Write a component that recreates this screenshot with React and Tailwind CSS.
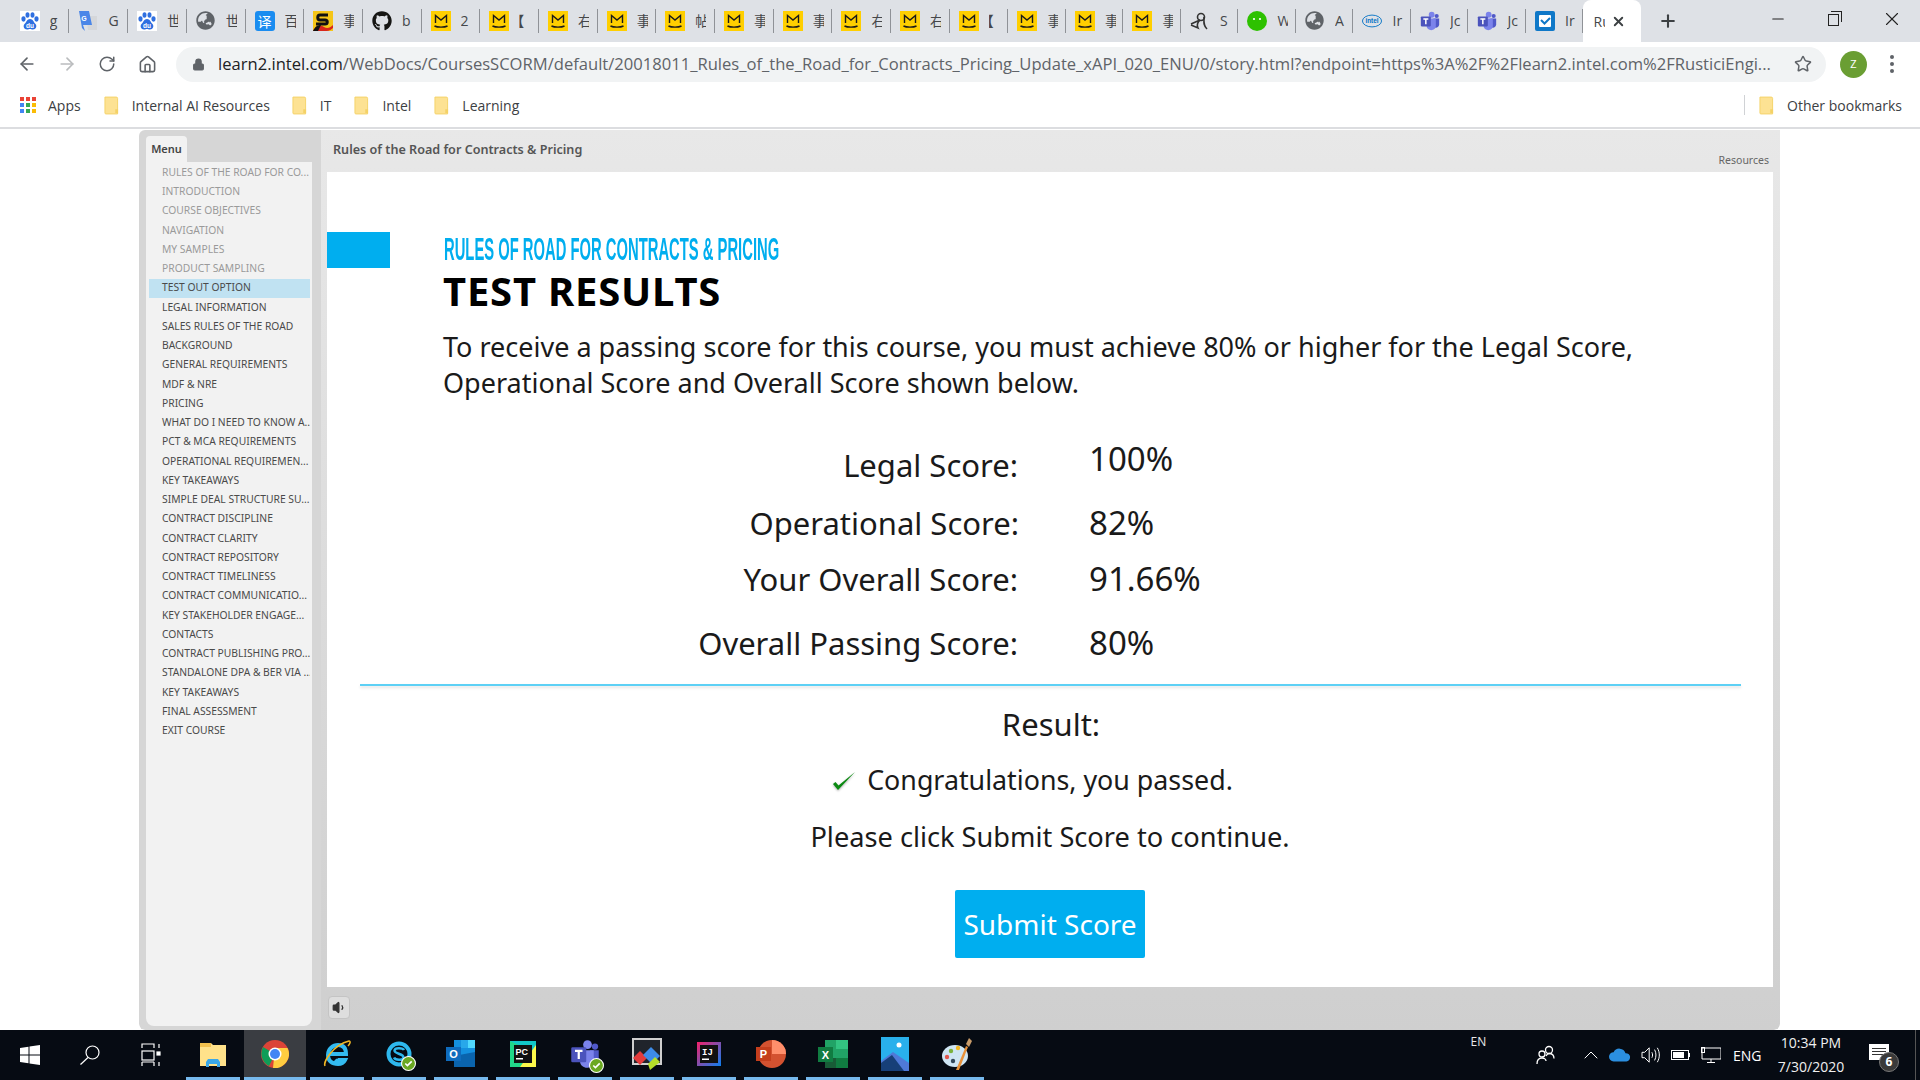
import React from "react";
import { ArrowLeft, ArrowRight, RotateCw, House, Lock, Star, X, Plus, Minus, Volume1, ChevronUp } from "lucide-react";
import { FaGithub, FaGlobeAsia } from "react-icons/fa";

const BaiduIcon = () => (
  <svg viewBox="0 0 20 20" className="w-5 h-5">
    <rect width="20" height="20" fill="#fff" />
    <g fill="#2f6fe0">
      <ellipse cx="3.5" cy="8" rx="2.1" ry="2.7" />
      <ellipse cx="7.5" cy="4" rx="2" ry="2.8" />
      <ellipse cx="12.5" cy="4" rx="2" ry="2.8" />
      <ellipse cx="16.5" cy="8" rx="2.1" ry="2.7" />
      <path d="M10 8c-3 0-3.500 3-5.500 5-1.800 2-.5 5.500 2.500 5.500 1.500 0 2-.5 3-.5s1.500.5 3 .5c3 0 4.300-3.500 2.500-5.500-2-2-2.500-5-5.500-5z" />
    </g>
    <text x="10" y="16.500" fontSize="6.500" fill="#fff" textAnchor="middle" fontFamily="Liberation Sans" fontWeight="700">du</text>
  </svg>
);
const GTranslateIcon = () => (
  <svg viewBox="0 0 20 20" className="w-5 h-5">
    <path d="M8 5h11v14H10z" fill="#d5d7da" />
    <path d="M1 0h10l3 14H5l2 6-3-3z" fill="#4a86e8" />
    <text x="6" y="10" fontSize="7" fill="#fff" textAnchor="middle" fontFamily="Liberation Sans" fontWeight="700">G</text>
  </svg>
);
const GlobeIcon = () => <FaGlobeAsia className="w-[19px] h-[19px] text-[#5f6368]" />;
const YiIcon = () => (
  <div className="w-5 h-5 rounded-[3px] bg-[#1a8cf0] flex items-center justify-center text-white text-[14px] leading-none font-['Noto_Sans_CJK_SC',sans-serif]">译</div>
);
const SIcon = () => (
  <svg viewBox="0 0 20 20" className="w-5 h-5">
    <rect width="20" height="20" fill="#f5c518" />
    <path d="M15 4H7C4 4 4 9 7 9h5c3 0 3 4 0 4H3" fill="none" stroke="#111" strokeWidth="3" />
    <path d="M0 20c3-6 8-6 11-4 3 2 6 1 9-2v3c-3 3-6 3-9 3z" fill="#d9261c" />
    <path d="M0 20c2-4 4-6 8-6l-3 6z" fill="#111" />
  </svg>
);
const GithubIcon = () => <FaGithub className="w-5 h-5 text-[#161614]" />;
const MailIcon = () => (
  <svg viewBox="0 0 20 20" className="w-5 h-5">
    <rect width="20" height="25" y="0" fill="#ffcf00" />
    <path d="M4.500 12V4.500L10 9l5.500-4.500V12" fill="none" stroke="#1a1a1a" strokeWidth="1.400" />
    <path d="M3.500 15c3 1.500 10 1.500 13 0" fill="none" stroke="#1a1a1a" strokeWidth="1.400" />
  </svg>
);
const CursiveIcon = () => (
  <svg viewBox="0 0 20 20" className="w-5 h-5" fill="none" stroke="#333" strokeWidth="1.600">
    <circle cx="11" cy="6" r="3.500" />
    <path d="M14 6c0 5-1 8 3 12M1 13l9-4c-3 3-3 6-2 8l-7-3" />
  </svg>
);
const WechatIcon = () => (
  <svg viewBox="0 0 20 20" className="w-5 h-5">
    <circle cx="10" cy="10" r="10" fill="#2dc100" />
    <circle cx="7" cy="8" r="1.100" fill="#fff" />
    <circle cx="13" cy="8" r="1.100" fill="#fff" />
  </svg>
);
const IntelIcon = () => (
  <svg viewBox="0 0 22 20" className="w-5 h-5">
    <ellipse cx="11" cy="10" rx="10.500" ry="6.500" fill="none" stroke="#0071c5" strokeWidth="1" />
    <text x="11" y="12.500" fontSize="7" fill="#0071c5" textAnchor="middle" fontFamily="Liberation Sans" fontWeight="700">intel</text>
  </svg>
);
const TeamsSmall = ({ big = false }) => (
  <svg viewBox="0 0 24 24" className={big ? "w-[30px] h-[30px]" : "w-5 h-5"}>
    <circle cx="14" cy="4.500" r="3.500" fill="#7b83eb" />
    <circle cx="20" cy="6" r="2.500" fill="#5059c9" />
    <path d="M16 9h7v7c0 3-2 4-4 4s-3-1-3-3z" fill="#5059c9" />
    <path d="M8 9h11v9c0 3-3 5-5.500 5S8 21 8 18z" fill="#7b83eb" />
    <rect x="1" y="6.500" width="12" height="12" rx="1" fill="#4b53bc" />
    <path d="M4 9.500h6M7 9.500v6.500" stroke="#fff" strokeWidth="1.800" fill="none" />
  </svg>
);
const CheckTile = () => (
  <svg viewBox="0 0 20 20" className="w-5 h-5">
    <rect width="20" height="20" rx="2" fill="#0f78c8" />
    <rect x="4" y="4" width="12" height="12" rx="1" fill="#fff" />
    <path d="M6 9l3.500 3.500L15 7" fill="none" stroke="#0f78c8" strokeWidth="2" />
  </svg>
);
const FolderIcon = () => (
  <svg viewBox="0 0 16 20" className="w-[15px] h-[19px] shrink-0">
    <path d="M1 1h12c1 0 1.500.5 1.500 1.500V19H2c-.7 0-1-.4-1-1z" fill="#fde293" stroke="#f4d267" strokeWidth="1" />
    <rect x="12" y="14" width="3" height="4" fill="#f4d267" />
  </svg>
);

const cjk = "font-['Open_Sans','Noto_Sans_CJK_SC',sans-serif]";

const tabs = [
  [BaiduIcon, "g"], [GTranslateIcon, "G"], [BaiduIcon, "世"], [GlobeIcon, "世"], [YiIcon, "百"], [SIcon, "事"], [GithubIcon, "b"],
  [MailIcon, "2"], [MailIcon, "【"], [MailIcon, "右"], [MailIcon, "事"], [MailIcon, "帖"], [MailIcon, "事"], [MailIcon, "事"],
  [MailIcon, "右"], [MailIcon, "右"], [MailIcon, "【"], [MailIcon, "事"], [MailIcon, "事"], [MailIcon, "事"],
  [CursiveIcon, "S"], [WechatIcon, "W"], [GlobeIcon, "A"], [IntelIcon, "Ir"], [TeamsSmall, "Jc"], [TeamsSmall, "Jc"], [CheckTile, "Ir"],
];

const TabStrip = () => (
  <div className={`h-[42px] bg-[#dee1e6] flex pl-[10.800px] shrink-0 ${cjk}`}>
    {tabs.map(([Icon, label], i) => (
      <div key={i} className={`${i < 17 ? "w-[58.700px]" : "w-[57.500px]"} shrink-0 flex items-center pl-[9px] pb-[1px]`}>
        <div className="w-5 h-5 flex items-center justify-center shrink-0"><Icon /></div>
        <span className={`ml-[10px] w-[11px] overflow-hidden whitespace-nowrap text-[14px] text-[#45474a] ${label === "【" ? "indent-[-9px] font-bold" : ""}`}>{label}</span>
        <span className="ml-auto h-[24px] w-px bg-[#8f9297]" />
      </div>
    ))}
    <div className="w-[58px] shrink-0 h-full bg-white rounded-t-lg flex items-center pl-[10px]">
      <span className="w-[12px] overflow-hidden whitespace-nowrap text-[14px] text-[#45474a]">Ru</span>
      <X className="w-[15px] h-[15px] ml-[6px] text-[#3c4043]" strokeWidth={3} />
    </div>
    <div className="w-[54px] flex items-center justify-center shrink-0">
      <Plus className="w-[20px] h-[20px] text-[#3c4043]" strokeWidth={2.500} />
    </div>
    <div className="ml-auto flex">
      <div className="w-[57px] flex items-center justify-center pb-[4px]"><Minus className="w-[18px] h-[18px] text-[#222]" strokeWidth={1.400} /></div>
      <div className="w-[57px] flex items-center justify-center pb-[4px] pr-[3px]">
        <div className="relative w-[11px] h-[12px] border border-[#222] mt-[2px]">
          <div className="absolute -top-[4px] left-[2px] w-[11px] h-[11px] border-t border-r border-[#222]" />
        </div>
      </div>
      <div className="w-[57px] flex items-center justify-center pb-[4px]"><X className="w-[22px] h-[22px] text-[#222]" strokeWidth={1.200} /></div>
    </div>
  </div>
);

const Toolbar = () => (
  <div className="h-[44px] bg-white flex items-center shrink-0">
    <div className="w-[176px] flex items-center pl-[17px] shrink-0">
      <ArrowLeft className="w-[20px] h-[20px] text-[#5f6368]" strokeWidth={2} />
      <ArrowRight className="w-[20px] h-[20px] text-[#babcbe] ml-[20px]" strokeWidth={2} />
      <RotateCw className="w-[18px] h-[18px] text-[#5f6368] ml-[21px]" strokeWidth={2} />
      <House className="w-[19px] h-[19px] text-[#5f6368] ml-[22px]" strokeWidth={2} />
    </div>
    <div className="w-[1650px] h-[35px] rounded-full bg-[#f1f3f4] flex items-center pl-[16px] relative font-['Open_Sans',sans-serif] text-[16.580px]">
      <Lock className="w-[13px] h-[13px] text-[#5f6368] fill-[#5f6368]" />
      <div className="ml-[13px] w-[1560px] overflow-hidden whitespace-nowrap text-[#5f6368]">
        <span className="text-[#202124]">learn2.intel.com</span>/WebDocs/CoursesSCORM/default/20018011_Rules_of_the_Road_for_Contracts_Pricing_Update_xAPI_020_ENU/0/story.html?endpoint=https%3A%2F%2Flearn2.intel.com%2FRusticiEngi...
      </div>
      <Star className="absolute right-[14px] w-[18px] h-[18px] text-[#5f6368]" strokeWidth={2} />
    </div>
    <div className="ml-[14px] w-[27px] h-[27px] rounded-full bg-[#6a9e33] text-white text-[11px] flex items-center justify-center font-['Open_Sans',sans-serif]">Z</div>
    <div className="ml-[23px] flex flex-col gap-[3px]">
      <span className="w-[4px] h-[4px] rounded-full bg-[#5f6368]" />
      <span className="w-[4px] h-[4px] rounded-full bg-[#5f6368]" />
      <span className="w-[4px] h-[4px] rounded-full bg-[#5f6368]" />
    </div>
  </div>
);

const Bookmark = ({ label, className = "" }) => (
  <div className={`flex items-center gap-[13px] ${className}`}>
    <FolderIcon />
    <span>{label}</span>
  </div>
);

const AppsIcon = () => {
  const colors = ["#ea4335", "#ea4335", "#ea4335", "#4285f4", "#34a853", "#fbbc05", "#4285f4", "#34a853", "#fbbc05"];
  return (
    <div className="grid grid-cols-3 gap-[2px] w-[16px]">
      {colors.map((c, i) => (
        <span key={i} className="w-[4px] h-[4px]" style={{ backgroundColor: c }} />
      ))}
    </div>
  );
};

const BookmarksBar = () => (
  <div className="h-[43px] bg-white flex items-center shrink-0 border-b-2 border-[#dcdde0] text-[14px] text-[#3c4043] font-['Open_Sans',sans-serif] pl-[20px] pb-[3px]">
    <AppsIcon />
    <span className="ml-[12px]">Apps</span>
    <Bookmark label="Internal AI Resources" className="ml-[23px]" />
    <Bookmark label="IT" className="ml-[22px]" />
    <Bookmark label="Intel" className="ml-[23px]" />
    <Bookmark label="Learning" className="ml-[23px]" />
    <div className="ml-auto flex items-center pr-[18px]">
      <span className="w-px h-[20px] bg-[#d0d2d5] mr-[14px]" />
      <Bookmark label="Other bookmarks" />
    </div>
  </div>
);

const menuItems = [
  "RULES OF THE ROAD FOR CO...", "INTRODUCTION", "COURSE OBJECTIVES", "NAVIGATION", "MY SAMPLES", "PRODUCT SAMPLING",
  "TEST OUT OPTION", "LEGAL INFORMATION", "SALES RULES OF THE ROAD", "BACKGROUND", "GENERAL REQUIREMENTS", "MDF & NRE", "PRICING",
  "WHAT DO I NEED TO KNOW A...", "PCT & MCA REQUIREMENTS", "OPERATIONAL REQUIREMEN...", "KEY TAKEAWAYS", "SIMPLE DEAL STRUCTURE SU...",
  "CONTRACT DISCIPLINE", "CONTRACT CLARITY", "CONTRACT REPOSITORY", "CONTRACT TIMELINESS", "CONTRACT COMMUNICATIO...",
  "KEY STAKEHOLDER ENGAGE...", "CONTACTS", "CONTRACT PUBLISHING PRO...", "STANDALONE DPA & BER VIA ...", "KEY TAKEAWAYS", "FINAL ASSESSMENT", "EXIT COURSE",
];

const Sidebar = () => (
  <div className="w-[182px] shrink-0 h-full flex flex-col pl-[7px] pt-[6px] bg-[#d6d6d6] rounded-tl-md rounded-bl-md">
    <div className="w-[41px] h-[26px] bg-[#f2f2f2] rounded-t-[4px] flex items-center justify-center text-[11px] font-semibold text-[#444] font-['Noto_Sans',sans-serif]">Menu</div>
    <div className="w-[166px] flex-1 mb-[4px] bg-[#f2f2f2] rounded-b-lg pl-[3px] pr-[2px] pt-[1px] font-['Noto_Sans',sans-serif] text-[10.300px]">
      {menuItems.map((item, i) => (
        <div
          key={i}
          className={`h-[19.260px] pl-[13px] flex items-center whitespace-nowrap overflow-hidden ${i < 6 ? "text-[#9a9a9a]" : "text-[#4a4a4a]"} ${i === 6 ? "bg-[#c0e2f2]" : ""}`}
        >
          {item}
        </div>
      ))}
    </div>
  </div>
);

const scores = [
  { label: "Legal Score:", value: "100%", row: "h-[60px]", labelCls: "pr-[1px]", valueCls: "mb-[12px]" },
  { label: "Operational Score:", value: "82%", row: "h-[56px]", labelCls: "", valueCls: "" },
  { label: "Your Overall Score:", value: "91.66%", row: "h-[56px]", labelCls: "pr-[1px]", valueCls: "" },
  { label: "Overall Passing Score:", value: "80%", row: "h-[72px]", labelCls: "pr-[1px]", valueCls: "" },
];

const Slide = () => (
  <div className="h-[815px] bg-white ml-[6px] mr-[7px] flex flex-col font-['Noto_Sans',sans-serif] text-[#1a1a1a] shrink-0">
    <div className="flex h-[229px] shrink-0">
      <div className="w-[63px] h-[36px] mt-[60px] bg-[#00aeef] shrink-0" />
      <div className="ml-[53px] pt-[60px] w-[1290px]">
        <div className="h-[36px] leading-[36px] text-[#00aeef] text-[31px] font-bold font-['Liberation_Sans',sans-serif] whitespace-nowrap origin-left scale-x-[0.477] ml-[1px]">RULES OF ROAD FOR CONTRACTS &amp; PRICING</div>
        <h1 className="h-[44px] mt-[1px] leading-[44px] text-[40px] tracking-[0.8px] font-bold text-black">TEST RESULTS</h1>
        <p className="mt-[16px] text-[27px] leading-[35.500px]">
          To receive a passing score for this course, you must achieve 80% or higher for the Legal Score,
          <br />
          Operational Score and Overall Score shown below.
        </p>
      </div>
    </div>
    <div className="mt-[34px] shrink-0">
      {scores.map((s) => (
        <div key={s.label} className={`flex items-center ${s.row}`}>
          <div className={`w-[692px] text-right text-[31px] whitespace-nowrap ${s.labelCls}`}>{s.label}</div>
          <div className={`ml-[70px] text-[33px] ${s.valueCls}`}>{s.value}</div>
        </div>
      ))}
    </div>
    <div className="ml-[33px] w-[1381px] h-[2px] mt-[5px] bg-[#5dd0f5] shadow-[0_2px_3px_rgba(0,0,0,0.12)] shrink-0" />
    <div className="h-[76px] flex items-center justify-center text-[31px] pl-[2px] shrink-0">Result:</div>
    <div className="h-[36px] flex items-center justify-center text-[26.800px] shrink-0">
      <span className="relative">
        <svg viewBox="0 0 24 22" className="absolute -left-[35px] top-[9px] w-[24px] h-[24px] drop-shadow-[0_1px_1px_rgba(0,0,0,0.35)]">
          <path d="M1 14l5 6L23 2 6.500 15.500 3.500 12z" fill="#0b8a12" />
        </svg>
        Congratulations, you passed.
      </span>
    </div>
    <div className="h-[78px] flex items-center justify-center text-[27.200px] shrink-0">Please click Submit Score to continue.</div>
    <button className="mt-[14px] self-center w-[190px] h-[68px] rounded-[2px] bg-[#00aeef] text-white text-[28px] shrink-0">Submit Score</button>
  </div>
);

const Player = () => (
  <div className="w-[1641px] ml-[139px] mt-[1px] h-[900px] flex rounded-b-md overflow-hidden">
    <Sidebar />
    <div className="flex-1 flex flex-col bg-linear-to-b from-[#e8e8e8] to-[#cfcfcf] rounded-br-md">
      <div className="h-[42px] pl-[12px] pr-[11px] flex justify-between shrink-0 font-['Noto_Sans',sans-serif]">
        <span className="text-[12.600px] font-semibold text-[#555] mt-[11px]">Rules of the Road for Contracts &amp; Pricing</span>
        <span className="text-[10.500px] text-[#666] mt-[23px]">Resources</span>
      </div>
      <Slide />
      <div className="pl-[7px] pt-[9px]">
        <div className="w-[22px] h-[23px] rounded-[4px] bg-[#dedede] border border-[#c4c4c4] flex items-center justify-center">
          <Volume1 className="w-[15px] h-[15px] text-[#333] fill-[#333]" />
        </div>
      </div>
    </div>
  </div>
);

/* taskbar drawings */
const WinLogo = () => (
  <svg viewBox="0 0 20 20" className="w-5 h-5" fill="#fff">
    <path d="M0 3l8.500-1.200v7.700H0zM9.500 1.600L20 0v9.500H9.500zM0 10.500h8.500v7.700L0 17zM9.500 10.500H20V20L9.500 18.400z" />
  </svg>
);
const SearchGlyph = () => (
  <svg viewBox="0 0 20 20" className="w-5 h-5" fill="none" stroke="#fff" strokeWidth="1.200">
    <circle cx="12.500" cy="7.500" r="6.500" />
    <path d="M8 12.500L.5 19.500" />
  </svg>
);
const TaskViewGlyph = () => (
  <svg viewBox="0 0 20 24" className="w-5 h-6" fill="none" stroke="#fff" strokeWidth="1.200">
    <path d="M1 5V1h12v4M1 19v4M13 19v4M1 19h12" />
    <rect x="1" y="8" width="12" height="9" />
    <path d="M18 1v4M18 19v4" />
    <rect x="16" y="9" width="3" height="3" fill="#fff" />
  </svg>
);
const ExplorerIcon = () => (
  <svg viewBox="0 0 28 28" className="w-[28px] h-[28px]">
    <path d="M1 3h11l2 2h13v21H1z" fill="#ffe28a" />
    <path d="M1 3h11v4H1z" fill="#f2c14e" />
    <path d="M9 19h10l2 3v5h-3v-3H10v3H7v-5z" fill="#3aa8e8" />
  </svg>
);
const ChromeIcon = () => (
  <svg viewBox="0 0 28 28" className="w-[28px] h-[28px]">
    <circle cx="14" cy="14" r="14" fill="#db4437" />
    <path d="M14 14L2 7a14 14 0 0 0 6 19z" fill="#0f9d58" />
    <path d="M14 8h12.500A14 14 0 0 1 12 28z" fill="#ffcd40" />
    <circle cx="14" cy="14" r="6.500" fill="#fff" />
    <circle cx="14" cy="14" r="5" fill="#4285f4" />
  </svg>
);
const IEIcon = () => (
  <svg viewBox="0 0 28 28" className="w-[28px] h-[28px]" fill="none">
    <path d="M6 14h17c0-6-3-9-8-9S5 9 5 15s4 9 10 9c4 0 6-2 7-4h-6c-1 1-3 1-4 0" stroke="#33bbf0" strokeWidth="4" />
    <path d="M2 26C0 22 10 5 26 1c2 0 1 3-1 5" stroke="#f2b824" strokeWidth="1.500" />
  </svg>
);
const Dot = () => (
  <svg viewBox="0 0 14 14" className="absolute -right-[4px] -bottom-[4px] w-[15px] h-[15px]">
    <circle cx="7" cy="7" r="6.500" fill="#6aa821" stroke="#fff" strokeWidth="1" />
    <path d="M4 7l2 2 4-4" fill="none" stroke="#fff" strokeWidth="1.500" />
  </svg>
);
const SkypeIcon = () => (
  <div className="relative w-[26px] h-[26px]">
    <svg viewBox="0 0 26 26" className="w-[26px] h-[26px]" fill="none">
      <circle cx="13" cy="13" r="10.500" stroke="#2eb8ee" strokeWidth="4" />
      <path d="M18 9c-1-2-9-3-9.500.5C8 13 18 12.500 17.500 16.500 17 20 9 19 8 16.500" stroke="#2eb8ee" strokeWidth="2.500" />
    </svg>
    <Dot />
  </div>
);
const OutlookIcon = () => (
  <svg viewBox="0 0 30 30" className="w-[30px] h-[30px]">
    <rect x="8" y="1" width="21" height="27" fill="#1490df" />
    <rect x="15" y="1" width="7" height="8" fill="#28a8ea" />
    <rect x="22" y="1" width="7" height="8" fill="#50d9ff" />
    <path d="M8 17l21-4v15H8z" fill="#0a64ad" />
    <rect x="0" y="8" width="15" height="14" fill="#0f6cbd" />
    <text x="7.500" y="19" fontSize="11" fontWeight="700" fill="#fff" textAnchor="middle" fontFamily="Liberation Sans">O</text>
  </svg>
);
const PyCharmIcon = () => (
  <svg viewBox="0 0 26 26" className="w-[26px] h-[26px]">
    <rect width="26" height="26" fill="#21d789" />
    <path d="M0 0h26v12z" fill="#12c8c8" />
    <path d="M26 4v22H10z" fill="#fcf84a" />
    <rect x="4" y="4" width="18" height="18" fill="#111" />
    <text x="5.500" y="14" fontSize="9" fontWeight="700" fill="#fff" fontFamily="Liberation Sans">PC</text>
    <rect x="6" y="17" width="7" height="1.500" fill="#fff" />
  </svg>
);
const TeamsBig = () => (
  <div className="relative"><TeamsSmall big /><Dot /></div>
);
const ToolIcon = () => (
  <svg viewBox="0 0 30 32" className="w-[30px] h-[32px]">
    <rect x="1" y="1" width="28" height="25" fill="#20242b" stroke="#cfcfcf" strokeWidth="2" />
    <path d="M1 20l7-7 7 7-7 7z" fill="#e33b3b" />
    <path d="M11 17l8-8 9 9-8 8z" fill="#3d8be8" />
    <path d="M16 26l7-7 5 5-10 8z" fill="#b6e02a" />
  </svg>
);
const IdeaIcon = () => (
  <svg viewBox="0 0 24 24" className="w-[24px] h-[24px]">
    <defs>
      <linearGradient id="ij" x1="0" y1="0" x2="1" y2="1">
        <stop offset="0" stopColor="#f5206a" />
        <stop offset="1" stopColor="#0b7ff0" />
      </linearGradient>
    </defs>
    <rect width="24" height="24" fill="url(#ij)" />
    <rect x="3" y="3" width="18" height="18" fill="#111" />
    <text x="5" y="13" fontSize="9" fontWeight="700" fill="#fff" fontFamily="Liberation Mono">IJ</text>
    <rect x="5" y="16.500" width="7" height="1.500" fill="#fff" />
  </svg>
);
const PptIcon = () => (
  <svg viewBox="0 0 30 30" className="w-[30px] h-[30px]">
    <circle cx="16" cy="15" r="14" fill="#d35230" />
    <path d="M16 1a14 14 0 0 1 14 14H16z" fill="#ff8f6b" />
    <rect x="0" y="8" width="15" height="14" fill="#c43e1c" />
    <text x="7.500" y="19" fontSize="11" fontWeight="700" fill="#fff" textAnchor="middle" fontFamily="Liberation Sans">P</text>
  </svg>
);
const ExcelIcon = () => (
  <svg viewBox="0 0 30 30" className="w-[30px] h-[30px]">
    <rect x="7" y="1" width="23" height="28" fill="#21a366" />
    <rect x="18" y="1" width="12" height="9" fill="#33c481" />
    <rect x="18" y="19" width="12" height="10" fill="#107c41" />
    <rect x="7" y="19" width="11" height="10" fill="#185c37" />
    <rect x="0" y="8" width="15" height="15" fill="#107c41" />
    <text x="7.500" y="19.500" fontSize="11" fontWeight="700" fill="#fff" textAnchor="middle" fontFamily="Liberation Sans">X</text>
  </svg>
);
const PhotosIcon = () => (
  <svg viewBox="0 0 28 34" className="w-[28px] h-[34px]">
    <rect width="28" height="34" fill="#29b0ec" />
    <circle cx="18" cy="8" r="2.500" fill="#fff" />
    <path d="M0 24l12-9 16 11v8H0z" fill="#4f79d8" />
    <path d="M0 26l11-8 12 16H0z" fill="#173f78" />
  </svg>
);
const PaintIcon = () => (
  <svg viewBox="0 0 30 34" className="w-[30px] h-[34px]">
    <ellipse cx="13" cy="19" rx="13" ry="11" fill="#cfe6f4" />
    <circle cx="9" cy="14" r="2.200" fill="#7cb33e" />
    <circle cx="16" cy="11" r="2.200" fill="#f2b824" />
    <circle cx="5" cy="20" r="2.200" fill="#e25a50" />
    <circle cx="11" cy="24" r="2.200" fill="#33485a" />
    <path d="M14 33l10-24 2 1-9 23z" fill="#e8913a" />
    <path d="M24 7l3-6 3 3-3 6z" fill="#c79b6a" />
  </svg>
);

const apps = [ExplorerIcon, ChromeIcon, IEIcon, SkypeIcon, OutlookIcon, PyCharmIcon, TeamsBig, ToolIcon, IdeaIcon, PptIcon, ExcelIcon, PhotosIcon, PaintIcon];

const Taskbar = () => (
  <div className="h-[50px] bg-[#060b13] flex text-white shrink-0 font-['Open_Sans',sans-serif]">
    <div className="w-[60px] flex items-center justify-center shrink-0"><WinLogo /></div>
    <div className="w-[60px] flex items-center justify-center shrink-0"><SearchGlyph /></div>
    <div className="w-[62px] flex items-center justify-center shrink-0"><TaskViewGlyph /></div>
    {apps.map((Icon, i) => (
      <div key={i} className={`w-[62px] shrink-0 flex flex-col ${i === 1 ? "bg-[#3a3d42]" : ""}`}>
        <div className="flex-1 flex items-center justify-center"><Icon /></div>
        <div className={`h-[3px] bg-[#76b9ed] ${i === 1 ? "" : "mx-[4px]"}`} />
      </div>
    ))}
    <div className="ml-auto flex items-center relative">
      <span className="absolute -left-[3.500px] top-[3px] text-[12px] text-[#e8e8e8]">EN</span>
      <svg viewBox="0 0 20 20" className="w-[20px] h-[20px] ml-[62px]" fill="none" stroke="#fff" strokeWidth="1.300">
        <circle cx="13" cy="5" r="3.500" /><circle cx="6" cy="9" r="3" />
        <path d="M1 19c0-4 2-6 5-6s4 2 4 3M10 11c1-2 2-2.500 3-2.500 3 0 5 2 5 5" />
      </svg>
      <ChevronUp className="w-[24px] h-[24px] ml-[23px] text-white" strokeWidth={1} />
      <svg viewBox="0 0 24 14" className="w-[22px] h-[14px] ml-[6px]"><path d="M5 14a5 5 0 0 1 0-10 7 7 0 0 1 13 1 4.500 4.500 0 0 1 1 9z" fill="#2b8fe0" /></svg>
      <svg viewBox="0 0 22 20" className="w-[22px] h-[18px] ml-[9px]" fill="none" stroke="#fff" strokeWidth="1.100">
        <path d="M1 7h3l5-5v16l-5-5H1zM12 7c1 2 1 4 0 6M15 4c2 4 2 8 0 12M18 2c3 5 3 11 0 16" />
      </svg>
      <div className="ml-[9px] w-[18px] h-[10px] border border-white flex p-[1px]"><span className="w-[11px] bg-white" /></div>
      <span className="w-[1px] h-[4px] bg-white" />
      <svg viewBox="0 0 20 16" className="w-[20px] h-[16px] ml-[11px]" fill="none" stroke="#fff" strokeWidth="1">
        <path d="M4 1h16v11H1V1h3M10 12v3M6 15.500h8" />
        <rect x=".5" y=".5" width="3" height="5" />
      </svg>
      <span className="ml-[12px] text-[14px] w-[30px]">ENG</span>
      <div className="ml-[12px] w-[72px] flex flex-col items-center text-[14px] leading-[24px] text-[#f0f0f0] whitespace-nowrap">
        <span>10:34 PM</span>
        <span>7/30/2020</span>
      </div>
      <div className="relative ml-[22px] w-[20px] h-[16px] bg-white mb-[6px]">
        <div className="absolute top-[4px] left-[3px] w-[14px] h-px bg-[#333]" />
        <div className="absolute top-[7px] left-[3px] w-[14px] h-px bg-[#333]" />
        <div className="absolute top-[10px] left-[3px] w-[14px] h-px bg-[#333]" />
        <div className="absolute -right-[10px] top-[8px] w-[20px] h-[20px] rounded-full bg-[#3a3a3a] border border-[#777] flex items-center justify-center text-[12px] font-bold">6</div>
      </div>
      <span className="ml-[26px] w-px h-full bg-[#555]" />
      <span className="w-[4px]" />
    </div>
  </div>
);

const App = () => {
  return (
    <div className="w-[1920px] h-screen overflow-hidden flex flex-col bg-white">
      <TabStrip />
      <Toolbar />
      <BookmarksBar />
      <div className="flex-1 min-h-0"><Player /></div>
      <Taskbar />
    </div>
  );
};

export default App;
